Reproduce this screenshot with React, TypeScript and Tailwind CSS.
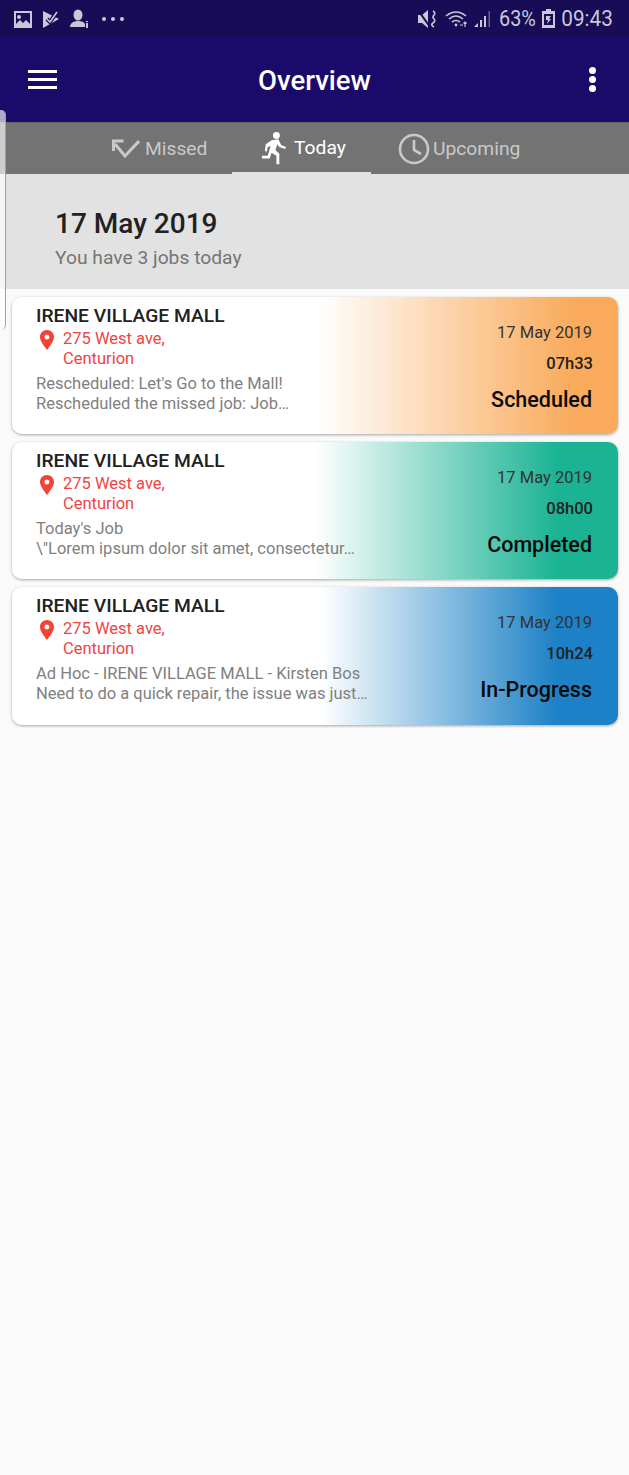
const jobs = [
  {
    line1: "Rescheduled: Let's Go to the Mall!",
    line2: "Rescheduled the missed job: Job…",
    time: "07h33",
    status: "Scheduled",
    gradient: "bg-[linear-gradient(90deg,#ffffff_0%,#ffffff_50.500%,#f9aa5a_93%)]",
  },
  {
    line1: "Today's Job",
    line2: '\\"Lorem ipsum dolor sit amet, consectetur…',
    time: "08h00",
    status: "Completed",
    gradient: "bg-[linear-gradient(90deg,#ffffff_0%,#ffffff_50%,#1ab394_90%)]",
  },
  {
    line1: "Ad Hoc - IRENE VILLAGE MALL - Kirsten Bos",
    line2: "Need to do a quick repair, the issue was just…",
    time: "10h24",
    status: "In-Progress",
    gradient: "bg-[linear-gradient(90deg,#ffffff_0%,#ffffff_51%,#1c81c6_90%)]",
  },
];

const StatusBar = () => (
  <div className="h-[37px] bg-[#170c55] flex items-center justify-between pl-[14px] pr-[16px] text-[#c9c8d8]">
    <div className="flex items-center gap-[11px]">
      <svg width="18" height="18" viewBox="0 0 18 18" fill="currentColor">
        <path fillRule="evenodd" d="M0 1h18v17H0zM2 3v11l4-4 3 3 3-3 4 4V3zM5 5a2 2 0 1 1 0 4 2 2 0 0 1 0-4z" />
      </svg>
      <svg width="16" height="18" viewBox="0 0 16 18" fill="currentColor">
        <path d="M0 1l16 8-16 9z" />
        <path d="M4 9l3 3 7-10" fill="none" stroke="#170c55" strokeWidth="4" />
        <path d="M4 9l3 3 7-10" fill="none" stroke="currentColor" strokeWidth="1.600" />
      </svg>
      <svg width="19" height="19" viewBox="0 0 19 19" fill="currentColor">
        <ellipse cx="8" cy="6" rx="4.500" ry="5.500" />
        <path d="M0 18c0-4 4-6 8-6s6 1 7 3v3z" />
        <path d="M16 12h2v1h-2zM16 14h2v5h-2z" />
      </svg>
      <div className="flex gap-[5px] ml-[2px]">
        <div className="w-[4px] h-[4px] rounded-full bg-[#c9c8d8]" />
        <div className="w-[4px] h-[4px] rounded-full bg-[#c9c8d8]" />
        <div className="w-[4px] h-[4px] rounded-full bg-[#c9c8d8]" />
      </div>
    </div>
    <div className="flex items-center">
      <svg width="20" height="20" viewBox="0 0 20 20" fill="currentColor">
        <path d="M0 6h4l6-5v18l-6-5H0z" />
        <path d="M0 1l12 17" stroke="#170c55" strokeWidth="2" />
        <path d="M15 2q3 2 1 4t0 4-1 4 1 4" fill="none" stroke="currentColor" strokeWidth="1.600" />
      </svg>
      <svg className="ml-[7px]" width="26" height="20" viewBox="0 0 26 20" fill="none" stroke="currentColor" strokeWidth="1.600">
        <path d="M1 7q10-8 20 0M4 10q7-6 14 0M7 13q4-3 8 0" />
        <circle cx="11" cy="16" r="1.400" fill="currentColor" stroke="none" />
        <path d="M15 16h3M20 18v-5M18.500 14.500l1.500-1.500 1.500 1.500" strokeWidth="1.200" />
      </svg>
      <svg className="ml-[1px]" width="20" height="20" viewBox="0 0 20 20" fill="currentColor">
        <path d="M2 18l4-4v4zM8 11h2v7H8zM12 7h2v11h-2z" />
        <path d="M16.500 2h1.500v16h-1.500z" opacity="0.45" />
      </svg>
      <span className="ml-[3px] font-['Roboto',sans-serif] text-[22px] leading-none scale-x-[0.9] origin-right">63%</span>
      <svg className="ml-[6px]" width="13" height="19" viewBox="0 0 13 19" fill="currentColor">
        <path fillRule="evenodd" d="M4 0h5v2h4v17H0V2h4zM2 5v11h9V5zM4 7h5l-2 3h2l-4 5 1-4H4z" />
      </svg>
      <span className="ml-[3px] font-['Roboto',sans-serif] text-[22px] leading-none scale-x-[0.94] origin-right">09:43</span>
    </div>
  </div>
);

const AppBar = () => (
  <div className="h-[85px] bg-[#1a0b6b] flex items-center justify-between pl-[28px] pr-[33px] relative">
    <div className="flex flex-col gap-[5px]">
      <div className="w-[29px] h-[3px] bg-white" />
      <div className="w-[29px] h-[3px] bg-white" />
      <div className="w-[29px] h-[3px] bg-white" />
    </div>
    <h1 className="absolute left-0 right-0 top-[30px] text-center text-white font-['Roboto',sans-serif] font-medium text-[27.500px] leading-[28px]">
      Overview
    </h1>
    <div className="flex flex-col gap-[2px]">
      <div className="w-[7px] h-[7px] rounded-full bg-white" />
      <div className="w-[7px] h-[7px] rounded-full bg-white" />
      <div className="w-[7px] h-[7px] rounded-full bg-white" />
    </div>
  </div>
);

const Tabs = () => (
  <div className="h-[52px] bg-[#737373] flex pl-[112px] font-['Roboto',sans-serif] text-[19.250px] border-t border-[#666666]">
    <div className="w-[120px] flex items-center text-[#c9c9c9]">
      <svg width="28" height="22" viewBox="0 0 28 22" fill="none" stroke="currentColor" strokeWidth="3">
        <path d="M27 3L13 18 3 6" />
        <path d="M1.500 13V3h10" />
      </svg>
      <span className="ml-[5px] pt-[1px]">Missed</span>
    </div>
    <div className="w-[139px] flex items-center pl-[29px] gap-[7px] text-white border-b-2 border-[#e2e2e2]">
      <svg width="26" height="34" viewBox="0 0 27 34" fill="currentColor">
        <circle cx="16" cy="4" r="3.600" />
        <path d="M11 9l7-1 3 6 5 2-1 2-6-2-2-3-2 6 4 4v11h-3v-9l-5-3-2 6H1v-3h6l3-10-3 1-1 5-2-1 1-7z" />
      </svg>
      <span className="pt-[1px]">Today</span>
    </div>
    <div className="flex items-center text-[#c9c9c9] pl-[27px]">
      <svg width="32" height="32" viewBox="0 0 32 32" fill="none" stroke="currentColor" strokeWidth="2.600">
        <circle cx="16" cy="16" r="14" />
        <path d="M16 7v10l7 4" />
      </svg>
      <span className="ml-[3px] pt-[1px]">Upcoming</span>
    </div>
  </div>
);

const Pin = () => (
  <svg width="16" height="20" viewBox="0 0 16 20" fill="#f44336">
    <path fillRule="evenodd" d="M8 0c4 0 7 3 7 7 0 4-4 9-7 13C5 16 1 11 1 7c0-4 3-7 7-7zm0 4.500a2.500 2.500 0 1 0 0 5 2.500 2.500 0 0 0 0-5z" />
  </svg>
);

const JobCard = ({ job }: { job: (typeof jobs)[number] }) => (
  <div className={`h-[137.200px] rounded-[10px] shadow-[0_1px_3px_rgba(0,0,0,0.35)] flex justify-between pl-[24px] pr-[26px] overflow-hidden ${job.gradient}`}>
    <div className="pt-[8px] min-w-0">
      <div className="font-['Roboto',sans-serif] font-medium text-[19.250px] leading-[22px] text-[#212121]">IRENE VILLAGE MALL</div>
      <div className="flex">
        <div className="pl-[3px] pt-[3px] w-[27px] shrink-0">
          <Pin />
        </div>
        <div className="font-['Roboto',sans-serif] text-[16.500px] leading-[20px] text-[#ef4444] pt-[2px]">
          275 West ave,
          <br />
          Centurion
        </div>
      </div>
      <div className="font-['Roboto',sans-serif] text-[16.500px] leading-[20px] text-[#808080] mt-[5px] whitespace-nowrap">
        {job.line1}
        <br />
        {job.line2}
      </div>
    </div>
    <div className="flex flex-col items-end font-['Roboto',sans-serif]">
      <div className="text-[16.500px] leading-[20px] text-[#333333] mt-[26px]">17 May 2019</div>
      <div className="text-[16.500px] leading-[20px] font-medium text-[#212121] mt-[11px] mr-[-1px]">{job.time}</div>
      <div className="text-[21.500px] leading-[24px] font-medium text-[#0a0a0a] mt-[14px]">{job.status}</div>
    </div>
  </div>
);

export default function App() {
  return (
    <div className="relative w-[629px] h-[1475px] bg-[#fafafa] overflow-hidden">
      <StatusBar />
      <AppBar />
      <Tabs />
      <div className="h-[115px] bg-[#e2e2e2] pl-[55px] pt-[34px] font-['Roboto',sans-serif]">
        <div className="text-[28px] leading-[32px] font-medium text-[#212121]">17 May 2019</div>
        <div className="text-[19.250px] leading-[24px] text-[#757575] mt-[5.500px]">You have 3 jobs today</div>
      </div>
      <div className="flex flex-col gap-[8px] pl-[12px] pr-[11px] pt-[8px]">
        {jobs.map((job) => (
          <JobCard key={job.time} job={job} />
        ))}
      </div>
      {/* peek of the side drawer */}
      <div className="absolute left-0 top-[110px] w-[6px] h-[220px] rounded-r-[5px] bg-white/65 border-r border-[#a0a0a0]" />
    </div>
  );
}
